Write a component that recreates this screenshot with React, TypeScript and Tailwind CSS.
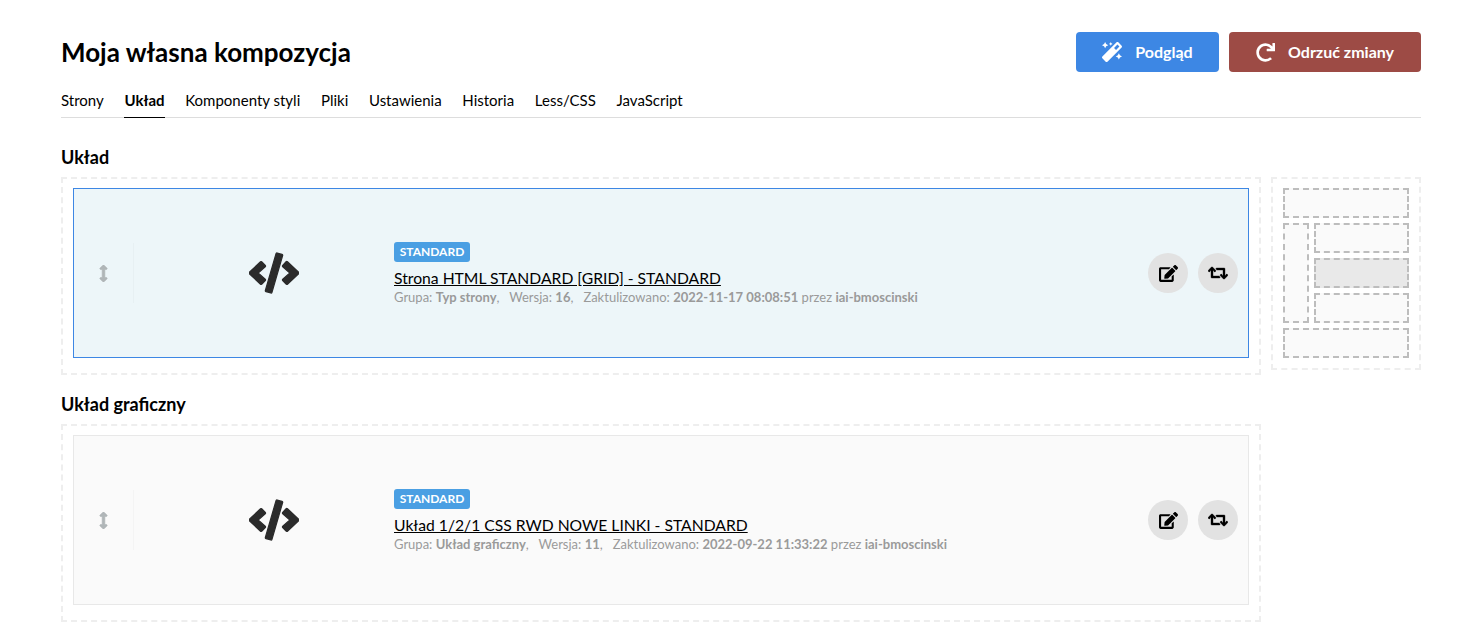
import { FaMagic, FaRedo, FaCode, FaEdit, FaRetweet, FaArrowsAltV } from "react-icons/fa";

const tabs = ["Strony", "Układ", "Komponenty styli", "Pliki", "Ustawienia", "Historia", "Less/CSS", "JavaScript"];

function Row({ active, title, group, version, date }: { active?: boolean; title: string; group: string; version: string; date: string }) {
  return (
    <div className={`flex h-[170px] items-center border ${active ? "border-[#3d87e4] bg-[#edf6f9]" : "border-[#e8e8e8] bg-[#fafafa]"}`}>
      <div className="flex h-[60px] w-[60px] shrink-0 items-center justify-center border-r border-[#00000006] pr-[1px]">
        <FaArrowsAltV className="stroke-[20px] text-[17px] text-[#b0b6b8]" />
      </div>
      <div className="flex w-[260px] shrink-0 items-center justify-center pl-5">
        <FaCode className="stroke-[16px] text-[50px] text-[#2b2b2b]" />
      </div>
      <div className="flex min-w-0 flex-1 flex-col items-start pt-[2px]">
        <span className="flex h-5 w-[76px] items-center justify-center rounded-[3px] bg-[#4a9fe3] text-[12px] font-bold text-white">STANDARD</span>
        <a className="mt-[6px] text-[15.7px] leading-[20px] text-black underline">{title}</a>
        <div className="text-[13px] leading-[18px] whitespace-pre text-[#9a9a9a]">
          Grupa: <b>{group}</b>,{"   "}Wersja: <b>{version}</b>,{"   "}Zaktulizowano: <b>{date}</b> przez <b>iai-bmoscinski</b>
        </div>
      </div>
      <div className="mr-[10px] flex gap-[10px]">
        <button className="flex h-10 w-10 items-center justify-center rounded-full bg-[#e2e2e2] text-[19px] text-black">
          <FaEdit />
        </button>
        <button className="flex h-10 w-10 items-center justify-center rounded-full bg-[#e2e2e2] text-[20px] text-black">
          <FaRetweet className="stroke-[12px]" />
        </button>
      </div>
    </div>
  );
}

function Mini({ className }: { className: string }) {
  return <div className={`border-2 border-dashed border-[#bdbdbd] ${className}`} />;
}

export default function App() {
  return (
    <div className="bg-white pt-8 pr-[50px] pl-[61px] pb-5 font-['Lato','Open_Sans',sans-serif] text-black">
      <div className="flex h-10 items-center justify-between">
        <h1 className="text-[26px] font-bold">Moja własna kompozycja</h1>
        <div className="flex gap-[10px]">
          <button className="flex h-10 w-[143px] items-center justify-center gap-[13px] rounded-[4px] bg-[#3d87e4] text-[16px] font-bold text-white">
            <FaMagic className="text-[20px]" />
            Podgląd
          </button>
          <button className="flex h-10 w-[192px] items-center justify-center gap-[13px] rounded-[4px] bg-[#9d4b45] text-[16px] font-bold text-white">
            <FaRedo className="text-[19px]" />
            Odrzuć zmiany
          </button>
        </div>
      </div>

      <div className="mt-[14px] flex gap-[20.7px] border-b border-[#dddddd]">
        {tabs.map((t) => (
          <div key={t} className={`-mb-px h-[32px] pt-[5px] text-[15px] leading-[18px] ${t === "Układ" ? "border-b border-black font-bold" : ""}`}>
            {t}
          </div>
        ))}
      </div>

      <h2 className="mt-[29px] text-[18px] leading-[20px] font-bold">Układ</h2>
      <div className="mt-[10px] flex items-start gap-[10px]">
        <div className="w-[1200px] border-2 border-dashed border-[#eeeeee] px-[10px] pt-[9px] pb-[15px]">
          <Row active title="Strona HTML STANDARD [GRID] - STANDARD" group="Typ strony" version="16" date="2022-11-17 08:08:51" />
        </div>
        <div className="flex w-[150px] flex-col gap-[5px] border-2 border-dashed border-[#eeeeee] px-[10px] pt-[9px] pb-[10px]">
          <Mini className="h-[30px] bg-[#fafafa]" />
          <div className="flex gap-[5px]">
            <Mini className="w-[26px] bg-[#fafafa]" />
            <div className="flex flex-1 flex-col gap-[5px]">
              <Mini className="h-[30px] bg-[#fafafa]" />
              <Mini className="h-[30px] bg-[#e9e9e9]" />
              <Mini className="h-[30px] bg-[#fafafa]" />
            </div>
          </div>
          <Mini className="h-[30px] bg-[#fafafa]" />
        </div>
      </div>

      <h2 className="mt-[19px] text-[18px] leading-[20px] font-bold">Układ graficzny</h2>
      <div className="mt-[10px] w-[1200px] border-2 border-dashed border-[#eeeeee] px-[10px] pt-[9px] pb-[15px]">
        <Row title="Układ 1/2/1 CSS RWD NOWE LINKI - STANDARD" group="Układ graficzny" version="11" date="2022-09-22 11:33:22" />
      </div>
    </div>
  );
}
